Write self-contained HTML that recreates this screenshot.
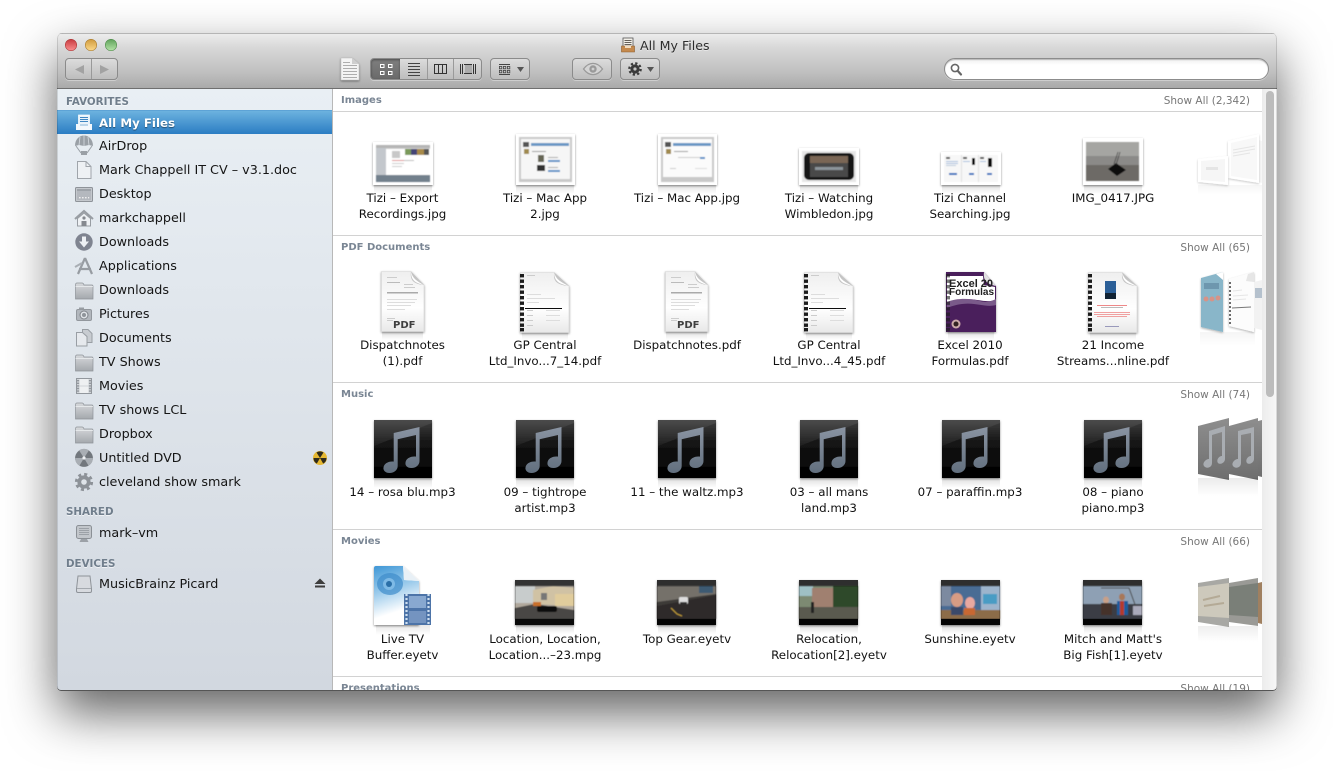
<!DOCTYPE html>
<html><head><meta charset="utf-8"><title>All My Files</title>
<style>
html,body{margin:0;padding:0;background:#fff;width:1334px;height:771px;overflow:hidden}
body{font-family:"DejaVu Sans","Liberation Sans",sans-serif}
#shadow{position:absolute;left:57px;top:33px;width:1220px;height:658px;border-radius:5px;box-shadow:0 22px 50px rgba(0,0,0,.62)}
#win{position:absolute;left:57px;top:33px;width:1220px;height:658px;border-radius:5px 5px 4px 4px;overflow:hidden;background:#fff}
#in{position:absolute;left:-57px;top:-33px;width:1334px;height:771px}
#in>div{position:absolute}
#edge{position:absolute;left:57px;top:33px;width:1220px;height:658px;box-sizing:border-box;border-radius:5px 5px 4px 4px;box-shadow:inset 0 -1px 0 #555,inset 1px 0 0 rgba(0,0,0,.12),inset -1px 0 0 rgba(0,0,0,.12);pointer-events:none}
#tb{left:57px;top:33px;width:1220px;height:55px;background:linear-gradient(#ececec,#d8d8d8 25%,#c0c0c0 70%,#aaa);border-top:1px solid #b5b5b5;box-sizing:border-box}
#tbl{left:57px;top:88px;width:1220px;height:1px;background:#6f6f6f}
#side{left:57px;top:89px;width:275px;height:602px;background:linear-gradient(#e9eff4,#d2d8e0)}
#sb{left:332px;top:89px;width:1px;height:602px;background:#b8b8b8}
#sel{left:57px;top:110px;width:275px;height:24px;background:linear-gradient(#6cb2df,#2b7dc3);border-top:1px solid #5da3d6;box-sizing:border-box}
#track{left:1262px;top:89px;width:15px;height:602px;background:linear-gradient(90deg,#ececec,#f8f8f8)}
#thumb{left:1266px;top:91px;width:8px;height:306px;background:#bcbcbc;border-radius:4px}
.ln{left:333px;width:929px;height:1px;background:#d2d2d2}
.btn{height:22px;box-sizing:border-box;border:1px solid #8b8b8b;border-radius:4px;background:linear-gradient(#dcdcdc,#bdbdbd);box-shadow:0 1px 0 rgba(255,255,255,.35)}
.s{left:99px;font-size:12.75px;line-height:16px;color:#151515;white-space:nowrap}
.h{left:66px;font-size:10.3px;line-height:14px;font-weight:bold;color:#707e8c;white-space:nowrap;text-shadow:0 1px 0 rgba(255,255,255,.6)}
.t{left:341px;font-size:10px;line-height:14px;font-weight:bold;color:#7a8694;white-space:nowrap}
.a{right:84px;font-size:10.5px;line-height:14px;color:#777;white-space:nowrap;text-align:right}
.l{width:142px;text-align:center;font-size:11.85px;line-height:16px;color:#111;white-space:nowrap}
#search{left:944px;top:58px;width:325px;height:22px;box-sizing:border-box;border:1px solid #8c8c8c;border-radius:11px;background:linear-gradient(#f0f0f0,#fff 30%);box-shadow:inset 0 1px 1px rgba(0,0,0,.25),0 1px 0 rgba(255,255,255,.35)}
svg{position:absolute;left:0;top:0}
</style></head>
<body>
<div id="shadow"></div>
<div id="win"><div id="in">
<div id="tb"></div><div id="tbl"></div>
<div id="side"></div><div id="sb"></div><div id="sel"></div>
<div id="track"></div><div id="thumb"></div>

<div class="ln" style="top:111px"></div>
<div class="ln" style="top:235px"></div>
<div class="ln" style="top:382px"></div>
<div class="ln" style="top:529px"></div>
<div class="ln" style="top:676px"></div>

<div class="btn" style="left:65px;top:58px;width:53px"></div>
<div class="btn" style="left:370px;top:58px;width:112px"></div>
<div style="left:371px;top:59px;width:29px;height:20px;background:linear-gradient(#7f7f7f,#6a6a6a);border-radius:3px 0 0 3px;box-shadow:inset 0 1px 2px rgba(0,0,0,.4)"></div>
<div class="btn" style="left:490px;top:58px;width:40px"></div>
<div class="btn" style="left:572px;top:58px;width:40px"></div>
<div class="btn" style="left:620px;top:58px;width:40px"></div>
<div id="search"></div>

<svg width="1334" height="771" viewBox="0 0 1334 771">
<defs>
<linearGradient id="rd" x1="0" y1="0" x2="0" y2="1"><stop offset="0" stop-color="#c73a3f"/><stop offset="1" stop-color="#fb8f8f"/></linearGradient>
<linearGradient id="yl" x1="0" y1="0" x2="0" y2="1"><stop offset="0" stop-color="#d09a3c"/><stop offset="1" stop-color="#fcd98a"/></linearGradient>
<linearGradient id="gr" x1="0" y1="0" x2="0" y2="1"><stop offset="0" stop-color="#5fa25a"/><stop offset="1" stop-color="#b5e3a8"/></linearGradient>
<linearGradient id="bk" x1="0" y1="0" x2="0" y2="1"><stop offset="0" stop-color="#3e3e3e"/><stop offset=".4" stop-color="#141414"/><stop offset="1" stop-color="#000"/></linearGradient>
<linearGradient id="nt" x1="0" y1="0" x2="0" y2="1"><stop offset="0" stop-color="#8a94a2"/><stop offset="1" stop-color="#626f7e"/></linearGradient>
<linearGradient id="pg" x1="0" y1="0" x2="0" y2="1"><stop offset="0" stop-color="#efefef"/><stop offset=".6" stop-color="#fff"/><stop offset="1" stop-color="#e8e8e8"/></linearGradient>
<linearGradient id="rf" x1="0" y1="0" x2="0" y2="1"><stop offset="0" stop-color="#000" stop-opacity=".13"/><stop offset="1" stop-color="#000" stop-opacity="0"/></linearGradient>
<linearGradient id="fd" x1="0" y1="0" x2="0" y2="1"><stop offset="0" stop-color="#d7d9dc"/><stop offset="1" stop-color="#a4a8ad"/></linearGradient>
<linearGradient id="bl" x1="0" y1="0" x2=".25" y2="1"><stop offset="0" stop-color="#3f97d6"/><stop offset=".45" stop-color="#9ccbeb"/><stop offset=".85" stop-color="#fff"/></linearGradient>
<linearGradient id="ms" x1="0" y1="0" x2="0" y2="1"><stop offset="0" stop-color="#8e8e8e"/><stop offset="1" stop-color="#6e6e6e"/></linearGradient>
<filter id="ds" x="-20%" y="-20%" width="140%" height="140%"><feDropShadow dx="0" dy="1" stdDeviation="1.1" flood-color="#000" flood-opacity=".45"/></filter>
<filter id="sf"><feGaussianBlur stdDeviation=".5"/></filter>

<g id="music">
<rect x="0" y="0" width="58" height="58" fill="url(#bk)"/>
<polygon points="0,0 58,0 58,3 0,26" fill="#fff" opacity=".07"/>
<path d="M19.7 13 L45.5 7 V41 C45.5 45 42 48 37.5 48 C33 48 31 45.5 31.5 42.5 C32 38.5 36.5 36 42 36.6 V15 L23.7 19.2 V46 C23.7 50 20 53 15.5 53 C11.5 53 9 50.5 9.5 47.5 C10 43.5 14.5 41 19.7 41.6 Z" fill="url(#nt)"/>
</g>

<g id="page">
<path d="M.5.5 H30 L43 14 V60.5 H.5 Z" fill="url(#pg)" stroke="#d5d5d5" stroke-width=".6"/>
<path d="M30 .5 C29 8 31 13 43 14 Z" fill="#c4c4c4"/>
<path d="M30 .5 C31 5 33 9 43 14 C35 12 30 10 30 .5 Z" fill="#fff"/>
</g>

<g id="plines">
<rect x="6" y="6" width="10" height="1" fill="#ccc"/><rect x="6" y="11" width="13" height="1" fill="#bbb"/>
<rect x="23" y="13" width="9" height="1" fill="#ccc"/><rect x="23" y="16" width="11" height="1" fill="#ccc"/>
<rect x="6" y="21" width="31" height="1.5" fill="#aaa"/>
<rect x="6" y="28" width="30" height="1" fill="#ddd"/><rect x="6" y="31" width="28" height="1" fill="#ddd"/><rect x="6" y="34" width="24" height="1" fill="#ddd"/><rect x="6" y="38" width="18" height="1" fill="#ddd"/>
<rect x="6" y="47" width="8" height="1" fill="#ccc"/><rect x="6" y="49" width="6" height="1" fill="#ccc"/>
</g>

<g id="spiral" fill="#1c1c1c">
<rect x="0" y="2" width="4" height="3.4"/><rect x="0" y="7.5" width="4" height="3.4"/><rect x="0" y="13" width="4" height="3.4"/><rect x="0" y="18.5" width="4" height="3.4"/><rect x="0" y="24" width="4" height="3.4"/><rect x="0" y="29.5" width="4" height="3.4"/><rect x="0" y="35" width="4" height="3.4"/><rect x="0" y="40.5" width="4" height="3.4"/><rect x="0" y="46" width="4" height="3.4"/><rect x="0" y="51.5" width="4" height="3.4"/><rect x="0" y="56" width="4" height="3.4"/>
</g>

<g id="invoice">
<use href="#page" transform="scale(1.14 1)"/>
<use href="#spiral"/>
<rect x="7" y="3" width="8" height="1" fill="#ccc"/><rect x="7" y="22" width="14" height="1" fill="#ddd"/><rect x="7" y="26" width="28" height="1" fill="#ddd"/><rect x="7" y="30" width="12" height="1" fill="#ddd"/>
<rect x="5" y="36" width="37" height="1" fill="#111"/>
<rect x="7" y="38" width="6" height="1" fill="#ccc"/><rect x="26" y="38" width="14" height="1" fill="#ddd"/><rect x="7" y="43" width="6" height="1" fill="#ccc"/><rect x="26" y="43" width="14" height="1" fill="#ddd"/><rect x="7" y="48" width="6" height="1" fill="#ccc"/><rect x="26" y="48" width="14" height="1" fill="#ddd"/><rect x="7" y="53" width="6" height="1" fill="#ccc"/>
</g>

<g id="folder">
<path d="M.5 3 Q.5 1 2 1 H7 Q8.5 1 9 3 H17 Q18 3 18 4.5 V17 H.5 Z" fill="url(#fd)" stroke="#8d9298" stroke-width=".7"/>
<path d="M.6 4.5 H18" stroke="#eef0f2" stroke-width=".8"/>
</g>
</defs>

<!-- traffic lights -->
<circle cx="71" cy="45" r="5.7" fill="url(#rd)" stroke="#a33" stroke-width=".6"/>
<circle cx="91" cy="45" r="5.7" fill="url(#yl)" stroke="#a87a2a" stroke-width=".6"/>
<circle cx="111" cy="45" r="5.7" fill="url(#gr)" stroke="#4d8a48" stroke-width=".6"/>

<!-- back/forward -->
<rect x="91" y="59" width="1" height="20" fill="#999"/>
<polygon points="75,69.5 84,65 84,74" fill="#a2a2a2"/>
<polygon points="109,69.5 100,65 100,74" fill="#a2a2a2"/>

<!-- toolbar doc icon -->
<g filter="url(#ds)"><path d="M341 58 H352 L359 64 V80 H341 Z" fill="#f4f4f4" stroke="#bbb" stroke-width=".5"/><path d="M352 58 V64 H359 Z" fill="#cfcfcf"/></g>
<g fill="#adadad"><rect x="343" y="62" width="7" height="1"/><rect x="343" y="65" width="14" height="1"/><rect x="343" y="68" width="14" height="1"/><rect x="343" y="71" width="14" height="1"/><rect x="343" y="74" width="14" height="1"/><rect x="343" y="77" width="14" height="1"/></g>

<!-- view seg -->
<g fill="none" stroke="#fff" stroke-width="1"><rect x="380.5" y="64.5" width="3.5" height="3"/><rect x="388.5" y="64.5" width="3.5" height="3"/><rect x="380.5" y="71.5" width="3.5" height="3"/><rect x="388.5" y="71.5" width="3.5" height="3"/></g>
<g fill="#444"><rect x="408" y="63" width="12" height="1"/><rect x="408" y="66" width="12" height="1"/><rect x="408" y="69" width="12" height="1"/><rect x="408" y="72" width="12" height="1"/><rect x="408" y="75" width="12" height="1"/></g>
<rect x="427" y="59" width="1" height="20" fill="#9a9a9a"/><rect x="453" y="59" width="1" height="20" fill="#9a9a9a"/>
<rect x="434.5" y="64.5" width="12" height="9" fill="none" stroke="#333"/><rect x="438" y="65" width="1" height="9" fill="#333"/><rect x="442" y="65" width="1" height="9" fill="#333"/>
<g fill="#333"><rect x="460" y="64" width="1" height="10"/><rect x="462" y="64" width="1" height="10"/><rect x="464" y="64" width="1" height="1"/><rect x="464" y="73" width="1" height="1"/><rect x="465" y="64" width="7" height="1"/><rect x="465" y="73" width="7" height="1"/><rect x="465" y="65" width="7" height="8" fill="#aaa"/><rect x="473" y="64" width="1" height="10"/><rect x="475" y="64" width="1" height="10"/></g>

<!-- arrange -->
<g fill="none" stroke="#444" stroke-width="1"><path d="M499 64.5 H510 M499 74.5 H510"/></g>
<g fill="none" stroke="#444" stroke-width=".8"><rect x="499.4" y="66.4" width="2.4" height="2.4"/><rect x="503.4" y="66.4" width="2.4" height="2.4"/><rect x="507.4" y="66.4" width="2.4" height="2.4"/><rect x="499.4" y="70.4" width="2.4" height="2.4"/><rect x="503.4" y="70.4" width="2.4" height="2.4"/><rect x="507.4" y="70.4" width="2.4" height="2.4"/></g>
<polygon points="517,67 524,67 520.5,72" fill="#555"/>

<!-- eye -->
<path d="M583.5 69 C589 61.5 597 61.5 602.5 69 C597 76.5 589 76.5 583.5 69 Z" fill="#d4d4d4" stroke="#9a9a9a" stroke-width="1.3"/>
<circle cx="593" cy="69" r="3.7" fill="#9a9a9a"/><circle cx="593" cy="69" r="1.4" fill="#cfcfcf"/>

<!-- gear -->
<circle cx="635" cy="69" r="4.6" fill="#3a3a3a"/>
<circle cx="635" cy="69" r="5.7" fill="none" stroke="#3a3a3a" stroke-width="2.2" stroke-dasharray="2.24 2.24"/>
<circle cx="635" cy="69" r="1.6" fill="#c4c4c4"/>
<polygon points="647,67 654,67 650.5,72" fill="#555"/>

<!-- title icon -->
<rect x="623" y="38" width="10" height="11" fill="#f2f0ea" stroke="#555" stroke-width=".8"/>
<g fill="#66615a"><rect x="624.5" y="40" width="7" height="1"/><rect x="624.5" y="42" width="7" height="1"/><rect x="624.5" y="44" width="7" height="1"/></g>
<path d="M621.5 46 H634.5 V52 H621.5 Z" fill="#c58a4e" stroke="#8a5a2a" stroke-width=".6"/>
<rect x="625" y="46" width="6" height="2" fill="#f0dcc0"/>

<!-- search glass -->
<circle cx="955" cy="68" r="3.6" fill="none" stroke="#666" stroke-width="1.6"/>
<path d="M957.6 70.8 L961 74.5" stroke="#666" stroke-width="2.2" stroke-linecap="round"/>

<!-- sidebar icons -->
<!-- all my files -->
<rect x="78.5" y="115" width="11" height="10" fill="#eaf3fa" stroke="#fff" stroke-width=".7"/>
<g fill="#3f86c2"><rect x="80" y="117" width="8" height="1"/><rect x="80" y="119" width="8" height="1"/><rect x="80" y="121" width="8" height="1"/></g>
<path d="M76 124 H92 V130 H76 Z" fill="#f3f8fc"/><rect x="80" y="124" width="8" height="2" fill="#bcd6ea"/>
<!-- airdrop -->
<path d="M75 146 C75 132 93 132 93 146 L89 145 L84 146 L79 145 Z" fill="#9aa0a6"/>
<path d="M80 137 L79 145 M84 135 V146 M88 137 L89 145" stroke="#d8dde2" stroke-width=".8"/>
<path d="M76 146 L81 153 M92 146 L87 153" stroke="#9aa0a6" stroke-width="1"/>
<rect x="81" y="151" width="6" height="4" fill="#9aa0a6"/>
<!-- doc -->
<path d="M77.5 161.5 H86 L91 166.5 V178.5 H77.5 Z" fill="#eef1f4" stroke="#a0a5ab"/>
<path d="M86 161.5 V166.5 H91" fill="none" stroke="#a0a5ab"/>
<!-- desktop -->
<rect x="75.5" y="187.5" width="17" height="14" rx="1" fill="#c4c8cd" stroke="#8e9399"/>
<rect x="77" y="189" width="14" height="11" fill="#b4b8be"/>
<rect x="77" y="189" width="14" height="2" fill="#9ea3a9"/>
<g fill="#eee"><rect x="79" y="197" width="1.6" height="1.4"/><rect x="82" y="197" width="1.6" height="1.4"/><rect x="85" y="197" width="1.6" height="1.4"/><rect x="88" y="197" width="1.2" height="1.4"/></g>
<!-- home -->
<path d="M75 219 L84 211 L93 219" fill="none" stroke="#989da3" stroke-width="2"/>
<path d="M77.5 218.5 L84 213 L90.5 218.5 V226 H77.5 Z" fill="#eef1f4" stroke="#989da3"/>
<circle cx="84" cy="218" r="1.6" fill="#85898f"/>
<rect x="81.5" y="221" width="5" height="5" fill="#85898f"/>
<!-- downloads circle -->
<circle cx="84" cy="242" r="8.7" fill="#7f8490"/>
<path d="M82 236.5 H86 V241.5 H89 L84 247.5 L79 241.5 H82 Z" fill="#eef1f4"/>
<!-- applications -->
<path d="M85 258 L78 274 M85 258 L92 274 M79 269 H91" fill="none" stroke="#979ca2" stroke-width="2.2"/>
<path d="M75 267 L82 263" stroke="#a9aeb4" stroke-width="2"/>
<!-- folders -->
<use href="#folder" x="75" y="282"/>
<!-- camera -->
<rect x="76.5" y="309.5" width="15" height="11" rx="1.5" fill="#b2b7bd" stroke="#92979d"/>
<rect x="79" y="307.5" width="5" height="2" fill="#989da3"/>
<circle cx="84" cy="315" r="4" fill="#dfe3e7" stroke="#80858b"/><circle cx="84" cy="315" r="2" fill="#8f949a"/>
<!-- documents -->
<path d="M76.5 332.5 H83 L87 336.5 V346 H76.5 Z" fill="#e6e9ed" stroke="#999ea4"/>
<path d="M82.5 329.5 H88 L92 333.5 V342.5 H87 V336.5 L82.5 332.5 Z" fill="#c8ccd1" stroke="#999ea4"/>
<use href="#folder" x="75" y="354"/>
<!-- movies -->
<rect x="76.5" y="378.5" width="15" height="15" fill="#d0d4d8" stroke="#92979d"/>
<rect x="79.5" y="379" width="9" height="6.5" fill="#eef0f2"/><rect x="79.5" y="386.5" width="9" height="6.5" fill="#eef0f2"/>
<path d="M78 380 V393 M90 380 V393" stroke="#92979d" stroke-width="2.2" stroke-dasharray="1.4 1.2"/>
<use href="#folder" x="75" y="402"/>
<use href="#folder" x="75" y="426"/>
<!-- dvd -->
<circle cx="84" cy="458" r="8.9" fill="#72777d"/>
<path d="M84 458 L79 450.3 A9 9 0 0 1 89 450.3 Z M84 458 L92.8 458 A9 9 0 0 1 88.5 465.6 Z M84 458 L79.5 465.6 A9 9 0 0 1 75.2 458 Z" fill="#a9aeb4"/>
<circle cx="84" cy="458" r="1.6" fill="#eef0f3"/>
<!-- gear -->
<circle cx="84" cy="482" r="6.6" fill="#8d9298"/>
<circle cx="84" cy="482" r="7.6" fill="none" stroke="#8d9298" stroke-width="3" stroke-dasharray="2.98 2.98"/>
<circle cx="84" cy="482" r="2.8" fill="#dfe4e9"/>
<!-- radiation -->
<circle cx="320" cy="458" r="7" fill="#e6b832"/>
<path d="M320 458 L316.5 452.5 A6.5 6.5 0 0 1 323.5 452.5 Z M320 458 L326.5 458 A6.5 6.5 0 0 1 323.2 463.6 Z M320 458 L316.8 463.6 A6.5 6.5 0 0 1 313.5 458 Z" fill="#2e2a1c"/>
<!-- mark-vm -->
<rect x="76.5" y="525.5" width="15" height="13" rx="2" fill="#c2c6cb" stroke="#8b9096"/>
<g fill="#9ca1a7"><rect x="79" y="528" width="10" height="1"/><rect x="79" y="530" width="10" height="1"/><rect x="79" y="532" width="10" height="1"/><rect x="79" y="534" width="10" height="1"/></g>
<path d="M81 539 H87 L88.5 542 H79.5 Z" fill="#9ca1a7"/>
<!-- disk -->
<path d="M78 576 H90 L91.5 589 V591 Q91.5 592.5 90 592.5 H78 Q76.5 592.5 76.5 591 V589 Z" fill="#d7dadf" stroke="#8e9399"/>
<path d="M77 588.5 H91" stroke="#a4a9af"/>
<!-- eject -->
<polygon points="320,578.5 325.5,584 314.5,584" fill="#3d3d3d"/><rect x="315" y="585.5" width="10" height="2" fill="#3d3d3d"/>

<!-- ===== IMAGES ROW ===== -->
<rect x="374" y="184" width="58" height="10" fill="url(#rf)"/>
<g filter="url(#ds)"><rect x="373" y="142" width="60" height="43" fill="#fff"/></g>
<g filter="url(#sf)">
<rect x="376" y="145" width="54" height="37" fill="#cfcfcf"/>
<rect x="376" y="145" width="54" height="3" fill="#b5b5b5"/>
<rect x="376" y="148" width="10" height="27" fill="#c3c7cc"/>
<rect x="386" y="149" width="44" height="26" fill="#fff"/>
<rect x="405" y="149" width="6" height="6" fill="#7a9a5a"/><rect x="411" y="149" width="6" height="6" fill="#447"/><rect x="417" y="149" width="7" height="6" fill="#a88a4a"/><rect x="424" y="149" width="5" height="6" fill="#555"/>
<rect x="392" y="151" width="8" height="7" fill="#c8c8c8"/>
<rect x="392" y="160" width="14" height="1" fill="#d88"/><rect x="392" y="163" width="12" height="1" fill="#ccc"/><rect x="392" y="166" width="10" height="1" fill="#ccc"/><rect x="404" y="160" width="10" height="1" fill="#bbb"/>
<rect x="376" y="175" width="54" height="7" fill="#72808c"/>
</g>

<rect x="516" y="184" width="58" height="10" fill="url(#rf)"/>
<g filter="url(#ds)"><rect x="516" y="134" width="59" height="51" fill="#fff"/></g>
<g filter="url(#sf)">
<rect x="519" y="137" width="53" height="45" fill="#c9c9c9"/>
<rect x="521" y="139" width="49" height="40" fill="#f6f6f6"/>
<rect x="531" y="143" width="38" height="3" fill="#6a97c5"/>
<rect x="523" y="142" width="6" height="5" fill="#555"/><rect x="524" y="149" width="5" height="5" fill="#a08a50"/>
<rect x="532" y="151" width="14" height="1" fill="#999"/>
<rect x="538" y="155" width="6" height="7" fill="#665"/><rect x="548" y="157" width="10" height="1" fill="#aaa"/><rect x="548" y="160" width="12" height="2" fill="#5a90c8"/>
<rect x="537" y="165" width="8" height="6" fill="#333"/><rect x="548" y="167" width="10" height="1" fill="#aaa"/><rect x="548" y="170" width="12" height="2" fill="#5a90c8"/>
</g>

<rect x="658" y="184" width="58" height="10" fill="url(#rf)"/>
<g filter="url(#ds)"><rect x="658" y="134" width="59" height="51" fill="#fff"/></g>
<g filter="url(#sf)">
<rect x="661" y="137" width="53" height="45" fill="#c9c9c9"/>
<rect x="663" y="139" width="49" height="38" fill="#fbfbfb"/>
<rect x="673" y="143" width="38" height="3" fill="#6a97c5"/>
<rect x="665" y="142" width="6" height="5" fill="#555"/><rect x="666" y="149" width="5" height="5" fill="#a08a50"/>
<rect x="674" y="151" width="14" height="1" fill="#999"/><rect x="678" y="157" width="22" height="1" fill="#ccc"/><rect x="700" y="157" width="5" height="2" fill="#5a90c8"/>
<rect x="670" y="168" width="6" height="1" fill="#ccc"/><rect x="695" y="168" width="12" height="1" fill="#ddd"/>
</g>

<rect x="800" y="184" width="58" height="10" fill="url(#rf)"/>
<g filter="url(#ds)"><rect x="799" y="148" width="60" height="37" fill="#fff"/></g>
<g filter="url(#sf)">
<rect x="802" y="151" width="54" height="31" fill="#e6e6e6"/>
<rect x="804" y="153" width="50" height="27" rx="5" fill="#131313"/>
<rect x="810" y="156" width="38" height="21" fill="#4a4a48"/>
<rect x="810" y="156" width="38" height="7" fill="#7a6654"/>
<rect x="815" y="167" width="28" height="3" fill="#8c949a"/>
</g>

<rect x="942" y="184" width="58" height="10" fill="url(#rf)"/>
<g filter="url(#ds)"><rect x="941" y="152" width="60" height="33" fill="#fff"/></g>
<g filter="url(#sf)">
<rect x="944" y="155" width="54" height="27" fill="#f7f7f7"/>
<rect x="946" y="157" width="4" height="2" fill="#555"/><rect x="946" y="161" width="12" height="1" fill="#a8c0de"/><rect x="946" y="163" width="12" height="1" fill="#a8c0de"/><rect x="946" y="165" width="10" height="1" fill="#bcd"/>
<rect x="949" y="173" width="8" height="2" fill="#2a6fc0"/>
<rect x="963" y="157" width="4" height="2" fill="#555"/><rect x="972" y="158" width="3" height="7" fill="#111"/><rect x="963" y="161" width="7" height="1" fill="#a8c0de"/><rect x="969" y="173" width="5" height="2" fill="#2a6fc0"/>
<rect x="980" y="157" width="4" height="2" fill="#555"/><rect x="988" y="158" width="4" height="9" fill="#111"/><rect x="980" y="161" width="6" height="1" fill="#a8c0de"/><rect x="987" y="173" width="5" height="2" fill="#2a6fc0"/>
<rect x="961" y="155" width="1" height="27" fill="#e0e0e0"/><rect x="978" y="155" width="1" height="27" fill="#e0e0e0"/>
</g>

<rect x="1084" y="184" width="58" height="10" fill="url(#rf)"/>
<g filter="url(#ds)"><rect x="1083" y="138" width="60" height="47" fill="#fff"/></g>
<g filter="url(#sf)">
<rect x="1086" y="142" width="53" height="39" fill="#8b8a88"/>
<rect x="1086" y="142" width="53" height="14" fill="#a5a5a2"/>
<rect x="1086" y="165" width="53" height="16" fill="#6d6a66"/>
<polygon points="1108,169 1116,163 1126,170 1117,176" fill="#111"/>
<path d="M1114 164 L1118 152 M1116 165 L1120 152" stroke="#333" stroke-width=".7"/>
</g>

<!-- images stack -->
<g opacity=".5">
<polygon points="1259,140 1262,141 1262,183 1259,182" fill="#eee"/>
<g filter="url(#ds)"><polygon points="1228,141 1259,134 1259,183 1228,178" fill="#fff"/></g>
<polygon points="1231,143 1257,137 1257,180 1231,176" fill="#f2f2f2"/>
<path d="M1233 150 L1255 146 M1233 153 L1255 149 M1233 156 L1250 153" stroke="#ccc"/>
<g filter="url(#ds)"><polygon points="1198,159 1228,156 1228,185 1198,182" fill="#fff"/></g>
<polygon points="1201,161 1225,159 1225,182 1201,180" fill="#efefef"/>
<rect x="1206" y="167" width="12" height="3" fill="#ccc"/>
</g>
<rect x="1198" y="185" width="64" height="10" fill="url(#rf)" opacity=".3"/>

<!-- ===== PDF ROW ===== -->
<rect x="382" y="331" width="41" height="9" fill="url(#rf)"/>
<g transform="translate(381 271)"><use href="#page" filter="url(#ds)"/><use href="#plines"/></g>
<text x="393" y="328" font-family="'DejaVu Sans',sans-serif" font-size="10" font-weight="bold" fill="#3f3f3f">PDF</text>

<rect x="522" y="331" width="46" height="9" fill="url(#rf)"/>
<g transform="translate(520 272)"><use href="#invoice" filter="url(#ds)"/></g>

<rect x="666" y="331" width="41" height="9" fill="url(#rf)"/>
<g transform="translate(665 271)"><use href="#page" filter="url(#ds)"/><use href="#plines"/></g>
<text x="677" y="328" font-family="'DejaVu Sans',sans-serif" font-size="10" font-weight="bold" fill="#3f3f3f">PDF</text>

<rect x="806" y="331" width="46" height="9" fill="url(#rf)"/>
<g transform="translate(804 272)"><use href="#invoice" filter="url(#ds)"/></g>

<!-- excel -->
<rect x="948" y="331" width="46" height="9" fill="url(#rf)"/>
<g transform="translate(946 272)">
<g filter="url(#ds)"><path d="M0 0 H38 L50 14 V60 H0 Z" fill="#4a1f5c"/></g>
<path d="M1 0 H38 L39 12 L50 14 V60 H1 Z" fill="#4a1f5c"/>
<path d="M1 4 H37 L38 13 L49 15 V28 C38 32 26 24 14 29 C8 31 4 33 1 32 Z" fill="#fff"/>
<path d="M38 0 C37 8 40 12 50 14 Z" fill="#e2e2e2"/>
<path d="M1 30 C10 26 24 26 34 29 C40 31 46 29 50 27 V33 C40 36 30 30 16 32 C8 33 4 35 1 36 Z" fill="#7a5a8a"/>
<text x="3" y="15" font-family="'Liberation Sans',sans-serif" font-size="11" font-weight="bold" fill="#222">Excel 20</text>
<text x="3" y="23" font-family="'Liberation Sans',sans-serif" font-size="10" font-weight="bold" fill="#222">Formulas</text>
<circle cx="10" cy="52" r="4.5" fill="#caa"/><circle cx="10" cy="52" r="2.5" fill="#322"/>
<use href="#spiral" opacity=".6"/>
</g>

<!-- 21 income -->
<rect x="1090" y="331" width="46" height="9" fill="url(#rf)"/>
<g transform="translate(1088 272)"><use href="#page" transform="scale(1.14 1)" filter="url(#ds)"/><use href="#spiral"/>
<rect x="17" y="9" width="11" height="15" fill="#2b5f97"/><rect x="17" y="21" width="11" height="6" fill="#123"/>
<rect x="9" y="33" width="30" height="1" fill="#e88"/><rect x="13" y="35" width="22" height="1" fill="#bbb"/>
<rect x="6" y="40" width="36" height="1" fill="#f0a0a0"/><rect x="6" y="42" width="36" height="1" fill="#f0a0a0"/><rect x="9" y="44" width="30" height="1" fill="#f0a0a0"/>
<rect x="17" y="54" width="14" height="1" fill="#99b"/>
</g>

<!-- pdf stack -->
<g opacity=".72">
<g filter="url(#ds)"><polygon points="1201,278 1223,272 1223,332 1201,327" fill="#5d9bb5"/></g>
<polygon points="1216,274 1223,272 1223,280" fill="#fff"/>
<g fill="#c96a5a"><circle cx="1206" cy="299" r="2.5"/><circle cx="1212" cy="299" r="2.5"/><circle cx="1218" cy="298" r="2.5"/></g>
<rect x="1204" y="283" width="15" height="6" fill="#37708f"/>
<g filter="url(#ds)"><polygon points="1229,279 1254,272 1254,332 1229,326" fill="#fbfbfb"/></g>
<polygon points="1248,274 1254,272 1254,282 1246,281" fill="#ddd"/>
<path d="M1232 308 L1251 307" stroke="#444"/>
<path d="M1230 282 V325" stroke="#333" stroke-width="2" stroke-dasharray="2 2"/>
<path d="M1233 300 L1246 299 M1233 296 L1248 295 M1233 291 L1242 290" stroke="#ddd"/>
<polygon points="1254,282 1262,280 1262,330 1254,328" fill="#eee"/>
<rect x="1255" y="288" width="7" height="10" fill="#9ab"/>
</g>
<rect x="1200" y="332" width="55" height="14" fill="url(#rf)" opacity=".3"/>

<!-- ===== MUSIC ROW ===== -->
<rect x="374" y="478" width="58" height="10" fill="url(#rf)"/><use href="#music" x="374" y="420" filter="url(#ds)"/>
<rect x="516" y="478" width="58" height="10" fill="url(#rf)"/><use href="#music" x="516" y="420" filter="url(#ds)"/>
<rect x="658" y="478" width="58" height="10" fill="url(#rf)"/><use href="#music" x="658" y="420" filter="url(#ds)"/>
<rect x="800" y="478" width="58" height="10" fill="url(#rf)"/><use href="#music" x="800" y="420" filter="url(#ds)"/>
<rect x="942" y="478" width="58" height="10" fill="url(#rf)"/><use href="#music" x="942" y="420" filter="url(#ds)"/>
<rect x="1084" y="478" width="58" height="10" fill="url(#rf)"/><use href="#music" x="1084" y="420" filter="url(#ds)"/>

<!-- music stack -->
<polygon points="1258,421 1262,420 1262,477 1258,476" fill="url(#ms)"/>
<polygon points="1229,426 1258,418 1258,480 1229,474" fill="url(#ms)"/>
<path d="M1238 431 L1254 427 V459 C1254 463 1249 465 1247 463 C1245 460 1248 456 1251 456 V433 L1241 435 V463 C1241 468 1235 469 1233 466 C1231 463 1235 459 1238 459 Z" fill="#a9adb2"/>
<polygon points="1198,426 1229,418 1229,480 1198,474" fill="url(#ms)"/>
<path d="M1209 431 L1225 426 V459 C1225 463 1220 465 1218 463 C1216 460 1219 456 1222 456 V432 L1212 435 V463 C1212 468 1206 469 1204 466 C1202 463 1206 459 1209 459 Z" fill="#a9adb2"/>
<rect x="1198" y="478" width="60" height="18" fill="url(#rf)" opacity=".6"/>

<!-- ===== MOVIES ROW ===== -->
<rect x="376" y="625" width="54" height="10" fill="url(#rf)" opacity=".7"/>
<g transform="translate(374 566)">
<g filter="url(#ds)"><path d="M0 2 Q0 0 2 0 H29 L45 15 V59 H0 Z" fill="#fff"/></g>
<path d="M0 2 Q0 0 2 0 H29 L30 14 L45 15 V42 H30 V59 H0 Z" fill="url(#bl)"/>
<path d="M29 0 L30 14 L45 15 Z" fill="#e8f0f6"/>
<ellipse cx="16" cy="18" rx="13" ry="11" fill="#3d8ccb" opacity=".7"/>
<circle cx="15" cy="18" r="6" fill="#7ebae6"/><circle cx="15" cy="18" r="3" fill="#2a6fa8"/>
<rect x="30" y="28" width="27" height="31" fill="#4d74a8"/>
<rect x="35" y="30" width="17" height="12" fill="#88a8d0"/><rect x="35" y="45" width="17" height="12" fill="#7494c0"/>
<path d="M32.5 28 V59 M54.5 28 V59" stroke="#cfe0f0" stroke-width="2.2" stroke-dasharray="2 2"/>
</g>

<rect x="516" y="625" width="58" height="9" fill="url(#rf)"/>
<g transform="translate(515 580)">
<g filter="url(#ds)"><rect width="59" height="45" fill="#111"/></g>
<rect width="59" height="6" fill="#333"/>
<g filter="url(#sf)">
<rect x="0" y="6" width="59" height="33" fill="#b0a89c"/>
<rect x="0" y="6" width="20" height="17" fill="#c8cccc"/>
<polygon points="18,10 38,6 59,8 59,26 18,24" fill="#d0c2a4"/>
<rect x="40" y="14" width="19" height="12" fill="#e0cc9c"/>
<rect x="26" y="13" width="6" height="7" fill="#777"/>
<polygon points="0,39 0,28 20,24 59,30 59,39" fill="#4a4744"/>
<rect x="22" y="26" width="20" height="6" rx="2" fill="#111"/>
<rect x="18" y="22" width="8" height="4" fill="#c8702a"/>
</g>
<rect y="39" width="59" height="6" fill="#0a0a0a"/>
</g>

<rect x="658" y="625" width="58" height="9" fill="url(#rf)"/>
<g transform="translate(657 580)">
<g filter="url(#ds)"><rect width="59" height="45" fill="#111"/></g>
<rect width="59" height="6" fill="#2e2e2e"/>
<g filter="url(#sf)">
<rect y="6" width="59" height="33" fill="#3c3a38"/>
<polygon points="0,6 59,6 59,14 0,22" fill="#75716a"/>
<rect x="42" y="6" width="14" height="7" fill="#3e5a72"/>
<polygon points="0,26 59,15 59,39 0,39" fill="#2e2c2a"/>
<rect x="22" y="17" width="9" height="7" rx="1.5" fill="#ddd"/><rect x="23" y="22" width="7" height="2" fill="#333"/>
<path d="M14 28 L20 34 L25 36" stroke="#c9a23a" stroke-width="1" fill="none"/>
</g>
<rect y="39" width="59" height="6" fill="#050505"/>
</g>

<rect x="800" y="625" width="58" height="9" fill="url(#rf)"/>
<g transform="translate(799 580)">
<g filter="url(#ds)"><rect width="59" height="45" fill="#111"/></g>
<rect width="59" height="6" fill="#2e2e2e"/>
<g filter="url(#sf)">
<rect y="6" width="59" height="33" fill="#7d8a72"/>
<rect y="6" width="14" height="10" fill="#9fc0c4"/>
<rect x="13" y="8" width="24" height="20" fill="#a08070"/>
<rect x="34" y="6" width="25" height="25" fill="#2f4a2a"/>
<rect y="27" width="59" height="12" fill="#5a5a50"/>
<rect x="12" y="22" width="3" height="11" fill="#222"/>
</g>
<rect y="39" width="59" height="6" fill="#050505"/>
</g>

<rect x="942" y="625" width="58" height="9" fill="url(#rf)"/>
<g transform="translate(941 580)">
<g filter="url(#ds)"><rect width="59" height="45" fill="#111"/></g>
<rect width="59" height="6" fill="#2e2e2e"/>
<g filter="url(#sf)">
<rect y="6" width="59" height="33" fill="#4a6c94"/>
<rect x="40" y="6" width="19" height="26" fill="#9db4cc"/>
<rect x="42" y="14" width="14" height="10" fill="#4a9cc4"/>
<rect y="6" width="10" height="20" fill="#7c8aa0"/>
<rect y="30" width="59" height="9" fill="#8c6c48"/>
<ellipse cx="16" cy="20" rx="6" ry="7" fill="#d89c84"/>
<ellipse cx="29" cy="23" rx="5" ry="6" fill="#e8a8a0"/>
<rect x="10" y="27" width="12" height="8" fill="#3a4a6a"/>
<rect x="23" y="28" width="11" height="7" fill="#c86830"/>
</g>
<rect y="39" width="59" height="6" fill="#050505"/>
</g>

<rect x="1084" y="625" width="58" height="9" fill="url(#rf)"/>
<g transform="translate(1083 580)">
<g filter="url(#ds)"><rect width="59" height="45" fill="#111"/></g>
<rect width="59" height="6" fill="#2e2e2e"/>
<g filter="url(#sf)">
<rect y="6" width="59" height="33" fill="#8ea0b4"/>
<rect y="24" width="59" height="15" fill="#3a3c44"/>
<path d="M18 8 H46 L54 30" stroke="#444" fill="none"/>
<ellipse cx="23" cy="20" rx="3" ry="3.5" fill="#c8a088"/><rect x="18" y="23" width="11" height="12" fill="#45302c"/>
<ellipse cx="39" cy="17" rx="3" ry="3.5" fill="#a87858"/><rect x="34" y="21" width="11" height="14" fill="#1f5c9c"/><rect x="37" y="21" width="4" height="14" fill="#b43a2a"/>
<rect x="50" y="26" width="9" height="9" fill="#aab"/>
</g>
<rect y="39" width="59" height="6" fill="#050505"/>
</g>

<!-- movie stack -->
<polygon points="1258,583 1262,582 1262,624 1258,623" fill="#a08060"/>
<polygon points="1229,583 1258,578 1258,626 1229,622" fill="#9a9a96"/>
<polygon points="1229,587 1258,583 1258,617 1229,615" fill="#7a7f78"/>
<polygon points="1198,583 1229,578 1229,627 1198,622" fill="#a8a8a4"/>
<polygon points="1198,587 1229,583 1229,618 1198,616" fill="#cdc9bc"/>
<path d="M1203 600 L1220 596 M1204 606 L1224 603" stroke="#b4aa96" stroke-width="2"/>
<rect x="1198" y="626" width="60" height="16" fill="url(#rf)" opacity=".5"/>
</svg>

<!-- title -->
<div style="left:640px;top:38px;font-size:12.6px;line-height:16px;color:#2c2c2c;white-space:nowrap;text-shadow:0 1px 0 rgba(255,255,255,.4)">All My Files</div>

<!-- sidebar text -->
<div class="h" style="top:95px">FAVORITES</div>
<div class="s" style="top:115px;font-weight:bold;font-size:11.8px;color:#fff;text-shadow:0 1px 1px rgba(0,0,0,.45)">All My Files</div>
<div class="s" style="top:139px">AirDrop</div>
<div class="s" style="top:163px">Mark Chappell IT CV – v3.1.doc</div>
<div class="s" style="top:187px">Desktop</div>
<div class="s" style="top:211px">markchappell</div>
<div class="s" style="top:235px">Downloads</div>
<div class="s" style="top:259px">Applications</div>
<div class="s" style="top:283px">Downloads</div>
<div class="s" style="top:307px">Pictures</div>
<div class="s" style="top:331px">Documents</div>
<div class="s" style="top:355px">TV Shows</div>
<div class="s" style="top:379px">Movies</div>
<div class="s" style="top:403px">TV shows LCL</div>
<div class="s" style="top:427px">Dropbox</div>
<div class="s" style="top:451px">Untitled DVD</div>
<div class="s" style="top:475px">cleveland show smark</div>
<div class="h" style="top:505px">SHARED</div>
<div class="s" style="top:526px">mark–vm</div>
<div class="h" style="top:557px">DEVICES</div>
<div class="s" style="top:577px">MusicBrainz Picard</div>

<!-- section headers -->
<div class="t" style="top:94px">Images</div><div class="a" style="top:94px">Show All (2,342)</div>
<div class="t" style="top:241px">PDF Documents</div><div class="a" style="top:241px">Show All (65)</div>
<div class="t" style="top:388px">Music</div><div class="a" style="top:388px">Show All (74)</div>
<div class="t" style="top:535px">Movies</div><div class="a" style="top:535px">Show All (66)</div>
<div class="t" style="top:682px">Presentations</div><div class="a" style="top:682px">Show All (19)</div>

<!-- labels -->
<div class="l" style="left:331.5px;top:190px">Tizi – Export<br>Recordings.jpg</div>
<div class="l" style="left:474px;top:190px">Tizi – Mac App<br>2.jpg</div>
<div class="l" style="left:616px;top:190px">Tizi – Mac App.jpg</div>
<div class="l" style="left:758px;top:190px">Tizi – Watching<br>Wimbledon.jpg</div>
<div class="l" style="left:899px;top:190px">Tizi Channel<br>Searching.jpg</div>
<div class="l" style="left:1042px;top:190px">IMG_0417.JPG</div>

<div class="l" style="left:331.5px;top:337px">Dispatchnotes<br>(1).pdf</div>
<div class="l" style="left:474px;top:337px">GP Central<br>Ltd_Invo...7_14.pdf</div>
<div class="l" style="left:616px;top:337px">Dispatchnotes.pdf</div>
<div class="l" style="left:758px;top:337px">GP Central<br>Ltd_Invo...4_45.pdf</div>
<div class="l" style="left:899px;top:337px">Excel 2010<br>Formulas.pdf</div>
<div class="l" style="left:1042px;top:337px">21 Income<br>Streams...nline.pdf</div>

<div class="l" style="left:331.5px;top:484px">14 – rosa blu.mp3</div>
<div class="l" style="left:474px;top:484px">09 – tightrope<br>artist.mp3</div>
<div class="l" style="left:616px;top:484px">11 – the waltz.mp3</div>
<div class="l" style="left:758px;top:484px">03 – all mans<br>land.mp3</div>
<div class="l" style="left:899px;top:484px">07 – paraffin.mp3</div>
<div class="l" style="left:1042px;top:484px">08 – piano<br>piano.mp3</div>

<div class="l" style="left:331.5px;top:631px">Live TV<br>Buffer.eyetv</div>
<div class="l" style="left:474px;top:631px">Location, Location,<br>Location...–23.mpg</div>
<div class="l" style="left:616px;top:631px">Top Gear.eyetv</div>
<div class="l" style="left:758px;top:631px">Relocation,<br>Relocation[2].eyetv</div>
<div class="l" style="left:899px;top:631px">Sunshine.eyetv</div>
<div class="l" style="left:1042px;top:631px">Mitch and Matt's<br>Big Fish[1].eyetv</div>

<div id="edge"></div>
</div></div>
</body></html>
